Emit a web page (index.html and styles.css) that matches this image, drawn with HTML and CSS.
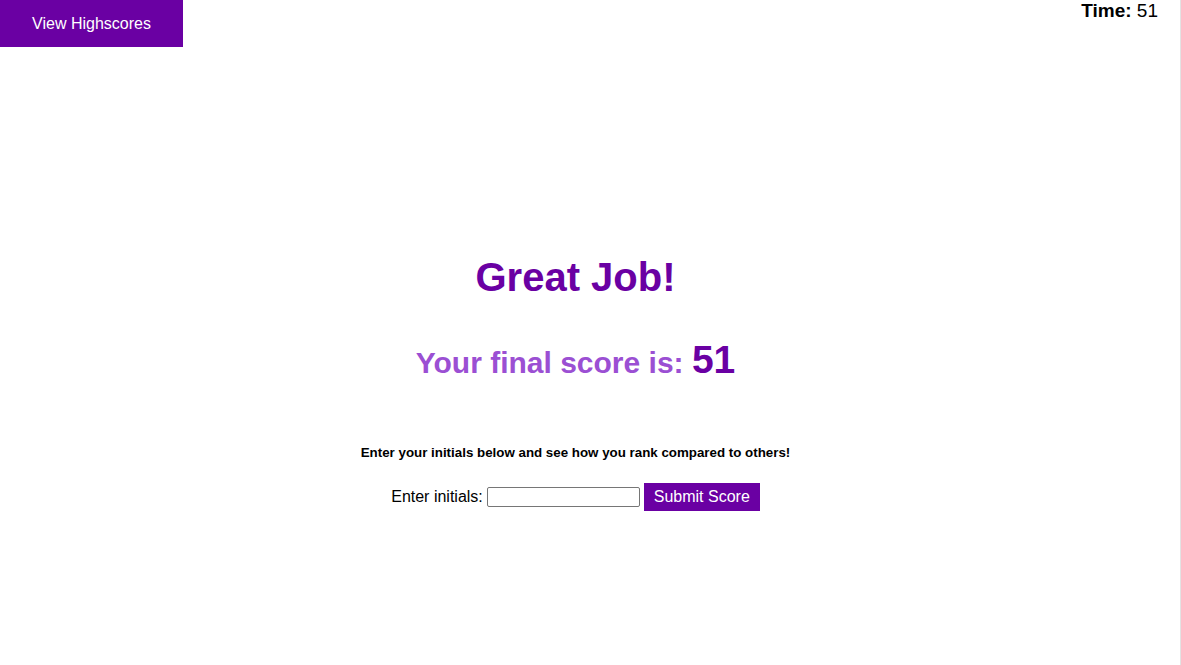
FILE: index.html
```html
<!DOCTYPE html>
<html>
<head>
<meta charset="utf-8">
<link rel="stylesheet" href="styles.css">
</head>
<body>
<div class="page">
  <header class="topbar">
    <button class="hs-btn">View Highscores</button>
    <div class="timer"><b>Time:</b> 51</div>
  </header>
  <main class="result">
    <h1 class="title">Great Job!</h1>
    <h2 class="score">Your final score is: <span class="num">51</span></h2>
    <p class="hint">Enter your initials below and see how you rank compared to others!</p>
    <form class="entry">
      <label for="ini">Enter initials:</label>
      <input id="ini" type="text" class="ini">
      <button type="button" class="submit">Submit Score</button>
    </form>
  </main>
</div>
</body>
</html>
```
FILE: styles.css
```css
html, body { margin: 0; padding: 0; }
body {
  font-family: "Liberation Sans", Arial, sans-serif;
  background: #fff;
  color: #000;
}
.page {
  width: 1180px;
  height: 665px;
  border-right: 1px solid #e3e3e3;
  box-sizing: content-box;
}
.topbar {
  display: flex;
  justify-content: space-between;
  align-items: flex-start;
}
.hs-btn {
  width: 183px;
  height: 47px;
  background: #6a00a3;
  color: #fff;
  border: none;
  font-family: inherit;
  font-size: 16px;
  padding: 0;
  margin: 0;
}
.timer {
  font-size: 19px;
  padding: 0 22px 0 0;
  line-height: 22px;
}
.result {
  width: 1151px;
  display: flex;
  flex-direction: column;
  align-items: center;
  text-align: center;
}
.title {
  margin: 207px 0 0;
  font-size: 40px;
  line-height: 46px;
  color: #6a00a3;
}
.score {
  margin: 38px 0 0;
  font-size: 30px;
  line-height: 44px;
  color: #9b4fd3;
}
.score .num {
  font-size: 39px;
  color: #6a00a3;
}
.hint {
  margin: 60px 0 0;
  font-size: 13.33px;
  font-weight: bold;
}
.entry {
  margin: 23px 0 0;
  display: flex;
  align-items: center;
  gap: 4px;
  font-size: 16px;
}
.ini {
  width: 149px;
  height: 16px;
  border: 1px solid #767676;
  border-radius: 2px;
  padding: 1px;
  margin: 0;
  font-size: 13px;
}
.submit {
  width: 116px;
  height: 28px;
  background: #6a00a3;
  color: #fff;
  border: none;
  font-family: inherit;
  font-size: 16px;
  padding: 0;
}
```
